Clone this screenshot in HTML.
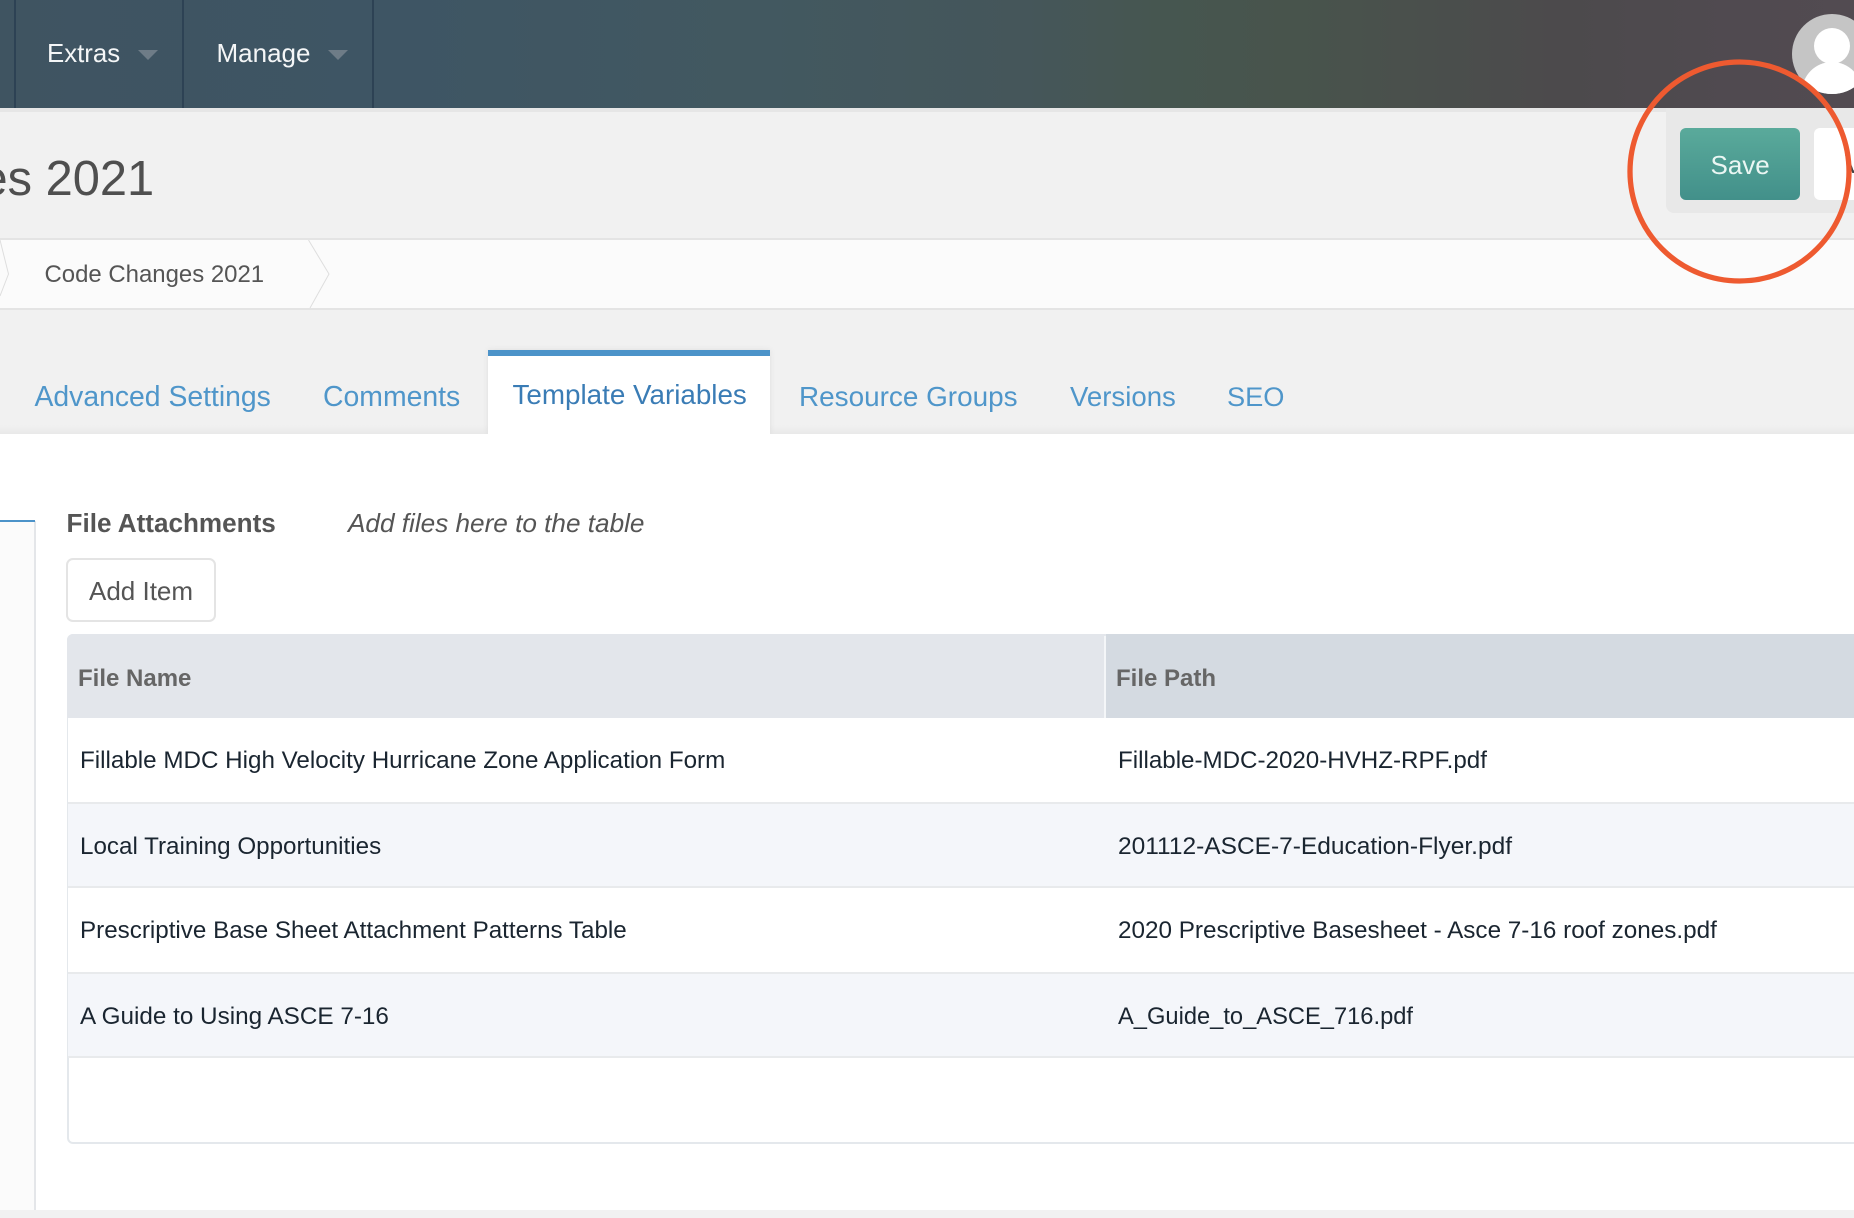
<!DOCTYPE html>
<html><head><meta charset="utf-8"><title>Code Changes 2021</title>
<style>
html,body{margin:0;padding:0;background:#f1f1f1}
#p{position:relative;width:1854px;height:1218px;overflow:hidden;background:#f1f1f1;font-family:"Liberation Sans",sans-serif}
#p div,#p span.t{position:absolute}
.t{white-space:nowrap;line-height:40px;height:40px}
.tab{font-size:28.2px;color:#4f96ca}
.row{left:68px;right:0;background:#fff;border-bottom:2px solid #e8eaec;box-sizing:border-box}
.alt{background:#f4f6fa}
.cell{font-size:24.2px;color:#1a2530}
</style></head><body><div id="p">

<div style="left:0;top:108px;width:1854px;height:4px;background:#e6e6e6"></div>
<div style="left:0;top:0;width:1854px;height:108px;background:linear-gradient(90deg,#3f5461 0px,#3e5564 400px,#425860 757px,#45565a 1025px,#465650 1159px,#48544c 1293px,#4a4f4c 1427px,#4c4a4c 1560px,#504a50 1739px,#524b51 1854px)"></div>
<div style="left:14px;top:0;width:1.5px;height:108px;background:#2d4254"></div>
<div style="left:182px;top:0;width:1.5px;height:108px;background:#2d4254"></div>
<div style="left:372px;top:0;width:1.5px;height:108px;background:#2d4254"></div>
<span class="t" style="left:47px;top:34px;font-size:25.8px;color:#f4f6f7">Extras</span>
<svg style="position:absolute;left:138px;top:50px" width="20" height="10"><path d="M0 0H20L10 10Z" fill="#6e7c87"/></svg>
<span class="t" style="left:216.5px;top:33px;font-size:26px;color:#f4f6f7">Manage</span>
<svg style="position:absolute;left:328px;top:50px" width="20" height="10"><path d="M0 0H20L10 10Z" fill="#6e7c87"/></svg>

<div style="left:1792px;top:14px;width:80px;height:80px;border-radius:50%;background:#c5c5c5;overflow:hidden">
  <div style="left:22px;top:14px;width:36px;height:36px;border-radius:50%;background:#fff"></div>
  <div style="left:10px;top:48px;width:60px;height:60px;border-radius:50%;background:#fff"></div>
</div>

<span class="t" style="left:-19.5px;top:159px;font-size:48.8px;color:#4f4f4f">es 2021</span>

<div style="left:1666px;top:108px;width:188px;height:105px;background:#e8e8e8;border-radius:0 0 0 8px"></div>
<div style="left:1680px;top:128px;width:120px;height:72px;border-radius:6px;background:linear-gradient(#5aaa9b,#42908a)"></div>
<span class="t" style="left:1710.5px;top:145px;font-size:26px;color:#eaf6f3">Save</span>
<div style="left:1814px;top:128px;width:60px;height:72px;border-radius:6px;background:#fff"></div>
<span class="t" style="left:1845px;top:145px;font-size:25.7px;color:#444">V</span>

<div style="left:0;top:238px;width:1854px;height:72px;background:#fbfbfb;border-top:2px solid #e4e4e4;border-bottom:2px solid #e4e4e4;box-sizing:border-box"></div>
<svg style="position:absolute;left:0;top:240px" width="340" height="68"><path d="M308.5 0L329 34L310 68M0 0L8.5 34L0 56" fill="none" stroke="#dedede" stroke-width="1"/></svg>
<span class="t" style="left:44.5px;top:255px;font-size:23.95px;color:#555">Code Changes 2021</span>

<div style="left:0;top:425px;width:1854px;height:9px;background:linear-gradient(#f1f1f1,#e9e9e9)"></div>
<div style="left:488px;top:350px;width:282px;height:84px;background:#fff;box-shadow:0 0 6px rgba(0,0,0,.08)"></div>
<div style="left:0;top:434px;width:1854px;height:776px;background:#fff"></div>
<div style="left:488px;top:350px;width:282px;height:6px;background:#4c93c9"></div>

<span class="t tab" style="left:34.5px;top:377px;font-size:28.35px">Advanced Settings</span>
<span class="t tab" style="left:323px;top:377px;font-size:28.4px">Comments</span>
<span class="t tab" style="left:512.5px;top:375px;font-size:27.8px;color:#3a7cb5">Template Variables</span>
<span class="t tab" style="left:799px;top:377px;font-size:27.9px">Resource Groups</span>
<span class="t tab" style="left:1070px;top:377px;font-size:27.6px">Versions</span>
<span class="t tab" style="left:1227px;top:377px;font-size:27.2px">SEO</span>

<div style="left:0;top:521px;width:36px;height:689px;background:#fbfbfb;border-right:2px solid #e4e6e9;box-sizing:border-box"></div>
<div style="left:0;top:520px;width:35px;height:2px;background:#4c93c9"></div>

<span class="t" style="left:66.5px;top:503px;font-size:26.1px;font-weight:bold;color:#555">File Attachments</span>
<span class="t" style="left:348px;top:503px;font-size:26.15px;font-style:italic;color:#555">Add files here to the table</span>

<div style="left:66px;top:558px;width:150px;height:64px;box-sizing:border-box;border:2px solid #e4e4e4;border-radius:7px;background:#fff"></div>
<span class="t" style="left:89px;top:571px;font-size:26px;color:#555">Add Item</span>

<div style="left:66.5px;top:634px;width:1800px;height:510px;box-sizing:border-box;border:2px solid #e4e8ec;border-radius:6px;background:#fff"></div>
<div style="left:66.5px;top:634px;width:1038px;height:84px;background:#e3e6eb;border-radius:6px 0 0 0"></div>
<div style="left:1106px;top:634px;width:748px;height:84px;background:#d4dae1"></div>
<div style="left:1104px;top:636px;width:2px;height:82px;background:#f4f6f8"></div>
<span class="t" style="left:78px;top:659px;font-size:24px;font-weight:bold;color:#666">File Name</span>
<span class="t" style="left:1116px;top:659px;font-size:24px;font-weight:bold;color:#666">File Path</span>

<div class="row" style="top:718px;height:86px"></div>
<div class="row alt" style="top:804px;height:84px"></div>
<div class="row" style="top:888px;height:86px"></div>
<div class="row alt" style="top:974px;height:84px"></div>

<span class="t cell" style="left:80px;top:741px">Fillable MDC High Velocity Hurricane Zone Application Form</span>
<span class="t cell" style="left:1118px;top:741px;font-size:24.15px">Fillable-MDC-2020-HVHZ-RPF.pdf</span>
<span class="t cell" style="left:80px;top:827px">Local Training Opportunities</span>
<span class="t cell" style="left:1118px;top:827px;font-size:24.5px">201112-ASCE-7-Education-Flyer.pdf</span>
<span class="t cell" style="left:80px;top:911px">Prescriptive Base Sheet Attachment Patterns Table</span>
<span class="t cell" style="left:1118px;top:911px;font-size:24.28px">2020 Prescriptive Basesheet - Asce 7-16 roof zones.pdf</span>
<span class="t cell" style="left:80px;top:997px;font-size:24.28px">A Guide to Using ASCE 7-16</span>
<span class="t cell" style="left:1118px;top:997px;font-size:23.7px">A_Guide_to_ASCE_716.pdf</span>

<svg style="position:absolute;left:1620px;top:52px" width="234" height="240"><circle cx="119.5" cy="119.5" r="109.5" fill="none" stroke="#ee5a30" stroke-width="5.3"/></svg>
</div></body></html>
